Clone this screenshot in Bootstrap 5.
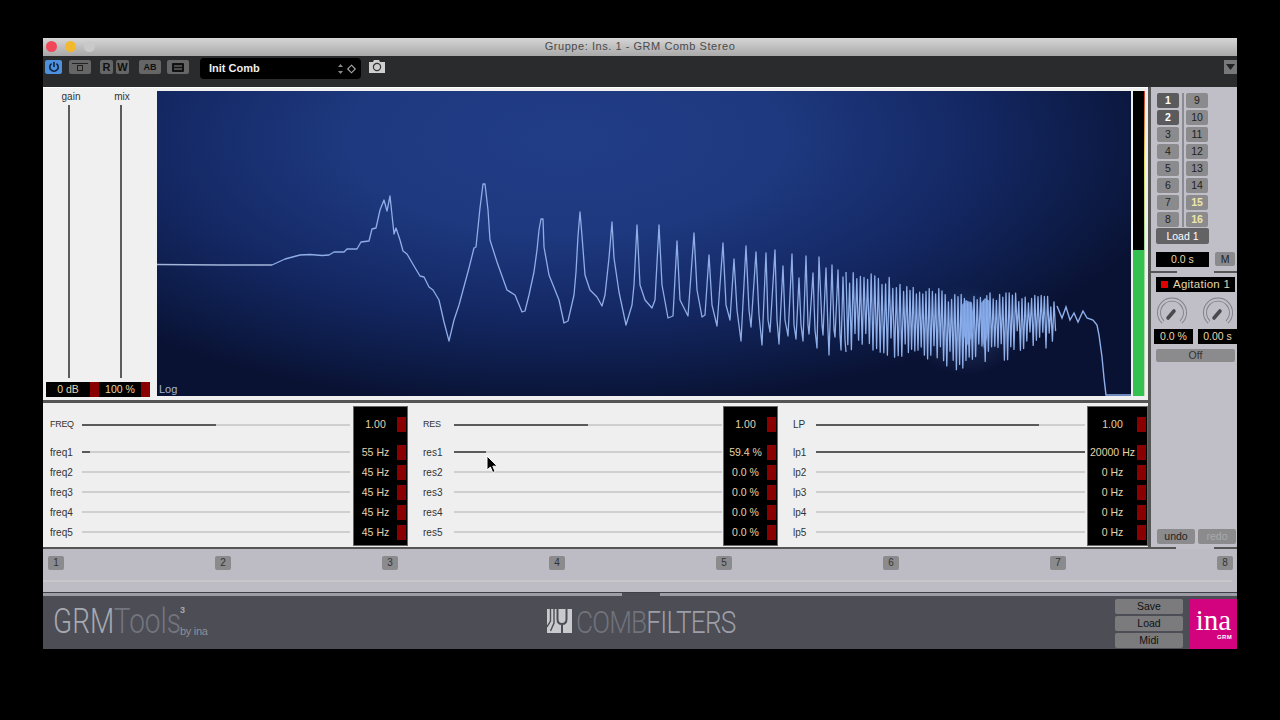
<!DOCTYPE html>
<html lang="en">
<head>
<meta charset="utf-8">
<title>GRM Comb Stereo</title>
<link href="https://cdn.jsdelivr.net/npm/bootstrap@5.3.0/dist/css/bootstrap.min.css" rel="stylesheet">
<style>
html,body{background:#000;height:720px;overflow:hidden}
body{font-family:"Liberation Sans",Arial,sans-serif;font-size:10.5px;color:#333;position:relative}
.pl-win{width:1194px;height:611px;margin:38px 0 0 43px}
.pl-title{height:18px;background:linear-gradient(#d6d6d6,#a9a9a9);color:#4a4a4a;font-size:11px;line-height:17px;position:relative;letter-spacing:.55px}
.pl-dot{width:11px;height:11px;border-radius:50%}
.pl-dots{position:absolute;left:3px;top:3px;gap:8px}
.pl-tool{height:31px;background:#2a2b2d;padding:0 0 0 2px}
.tb{height:14px;margin-top:4px;background:#666;border-radius:2px;color:#111;display:flex;align-items:center;justify-content:center;font-weight:700;font-size:11px;line-height:1}
.tb svg{display:block}
.tb-power{width:17px;background:#4c90de;margin-right:7px}
.tb-a{width:22px;margin-right:9px}
.tb-r{width:13px;margin-right:3px}
.tb-w{width:13px;margin-right:10px}
.tb-ab{width:22px;margin-right:6px;font-size:9px}
.tb-l{width:22px;margin-right:11px}
.pl-preset{width:161px;height:21px;margin-top:2px;background:#000;border-radius:4px;color:#eee;font-weight:700;font-size:11px;padding:0 2px 0 9px}
.pl-cam{margin:4px 0 0 7px}
.pl-menu{width:13px;height:14px;margin-top:4px;background:#77787c;margin-left:auto;display:flex;align-items:center;justify-content:center}
.pl-main{height:462px}
.pl-left{width:1108px;border-right:3px solid #555;border-bottom:2px solid #555;background:#efefef}
.pl-top{height:316px;flex:0 0 316px;border-bottom:3px solid #555;padding:3px 0 0 0;background:#f0f0f0;border-top:1px solid #fff}
.pl-io{width:114px;padding-left:3px}
.pl-iolabels{height:14px;font-size:10px;line-height:12px;color:#333}
.pl-iolabels span{width:52px;text-align:center;display:block}
.pl-iolabels span:first-child{width:50px}
.pl-vf{height:273px}
.pl-vline{width:2px;background:#5c5c5c}
.pl-vf .pl-vline:first-child{margin-left:22px}
.pl-vf .pl-vline:last-child{margin-left:50px}
.pl-ioval{width:104px;height:15px;margin-top:4px;background:#000;color:#e8d6ac;font-size:10.5px;line-height:15px}
.pl-ioval span{display:block;text-align:center}
.pl-ioval .v1{width:44px}
.pl-ioval .v2{width:42px}
.pl-red{background:#8a0000}
.pl-ioval .pl-red{width:9px}
.pl-disp{width:974px;height:305px;position:relative;background:radial-gradient(ellipse 64% 88% at 42% 16%,#213d86 0%,#1e397f 35%,#142864 65%,#0c1a44 88%,#0a1233 100%);overflow:hidden}
.pl-disp svg{display:block}
.pl-log{position:absolute;left:2px;bottom:0;color:#a6b6cf;font-size:11px;line-height:13px}
.pl-meter{width:12px;height:305px;margin-left:2px;background:linear-gradient(#d23a2a,#e2d860 22%,#9fd69a 52%,#c8d8c0) right/1px 100% no-repeat,linear-gradient(#000 52%,#35c14f 52%)}
.pl-rows{height:142px}
.pl-sec{height:142px;padding-top:4px}
.pl-sec1{width:364px;padding-left:7px}
.pl-sec2{width:370px;padding-left:16px}
.pl-sec3{width:370px;padding-left:16px}
.pl-fcol{flex:1 1 auto;min-width:0}
.pl-frow{height:20px;display:flex;align-items:center;font-size:10px;color:#333}
.pl-frow.big{height:35px}
.pl-frow.big .pl-lab{font-size:9px;letter-spacing:-.3px}
.pl-sec3 .pl-frow.big .pl-lab{font-size:10px;letter-spacing:0}
.pl-lab{flex:0 0 auto}
.pl-sec1 .pl-lab{width:32px}
.pl-sec2 .pl-lab{width:31px}
.pl-sec3 .pl-lab{width:23px}
.pl-track{flex:1 1 auto;height:2px;background:#cfcfcf;position:relative}
.pl-fill{display:block;height:2px;background:#5a5a5a}
.pl-sec1 .pl-fcol{padding-right:4px}
.pl-sec2 .pl-fcol{padding-right:2px}
.pl-sec3 .pl-fcol{padding-right:3px}
.pl-vcol{flex:0 0 53px;background:#000;height:138px;color:#e4d3ac;box-shadow:0 0 0 1px #666}
.pl-sec3 .pl-vcol{flex-basis:59px}
.pl-vrow{height:20px;display:flex;align-items:center;justify-content:space-between;font-size:10.5px}
.pl-vrow.big{height:35px}
.pl-vrow b{font-weight:400;flex:1 1 auto;text-align:center;white-space:nowrap;padding-top:1px}
.pl-vrow i{display:block;width:9px;height:15px;background:#8a0000;margin-right:1px}
.pl-strip{height:43px;background:#bdbcc4}
.pl-nums{padding:7px 4px 0 5px}
.pl-n{width:16px;height:14px;background:#8b8b8d;border-radius:2px;font-size:10px;line-height:14px;text-align:center;color:#333}
.pl-stripline{height:2px;background:#c8c8ca;margin:10px 5px 0 0}
.pl-right{width:86px;background:#c0bfc7;padding:6px 0 0 0}
.pl-grid{display:grid;grid-template-columns:22px 22px;column-gap:7px;row-gap:2px;width:51px;margin-left:6px;background:linear-gradient(#8a8a92,#8a8a92) center/2px 100% no-repeat}
.pl-ch{height:15px;background:#8b8b8d;border-radius:2px;text-align:center;font-size:10.5px;line-height:15px;color:#222}
.pl-ch.on{background:#5b5b5d;color:#fff;font-weight:700}
.pl-ch.hi{color:#efe7a6;font-weight:700}
.pl-load{width:53px;height:16px;background:#636365;color:#fff;text-align:center;line-height:16px;margin:1px 0 0 5px;border-radius:2px;font-size:10.5px}
.pl-time{margin:8px 0 0 5px}
.pl-tval{width:53px;height:15px;background:#000;color:#e8d6ac;text-align:center;line-height:15px}
.pl-m{width:20px;height:14px;background:#8b8b8d;border-radius:2px;text-align:center;line-height:14px;margin-left:6px;color:#222}
.pl-sep{height:2px;margin-top:4px}
.pl-sep span{display:block;height:2px;background:#555}
.pl-sep .s1{width:26px}
.pl-sep .s2{width:23px}
.pl-agit{height:15px;width:79px;margin:4px 0 0 5px;background:#000;color:#e8d6ac;font-size:11.5px;line-height:15px;padding-left:5px;letter-spacing:.25px;white-space:nowrap}
.pl-agit i{display:inline-block;width:7px;height:7px;background:#e00000;margin-right:5px}
.pl-knobs{margin:5px 0 0 6px;height:32px;gap:16px}
.pl-kv{margin:0 0 0 3px;gap:5px}
.pl-kv span{display:block;height:15px;background:#000;color:#e8d6ac;text-align:center;line-height:15px;white-space:nowrap}
.pl-kv .a{width:39px}
.pl-kv .b{width:39px}
.pl-off{width:79px;height:13px;margin:5px 0 0 5px;background:#8b8b8d;border-radius:2px;text-align:center;line-height:13px;color:#333}
.pl-undo{margin:167px 0 0 6px;gap:3px}
.pl-undo span{display:block;width:38px;height:15px;background:#8b8b8d;border-radius:2px;text-align:center;line-height:15px;color:#222}
.pl-undo span+span{color:#a9a9ab}
.pl-rsep{height:2px;margin-top:3px}
.pl-rsep .s1{display:block;width:25px;height:2px;background:#555}
.pl-rsep .s2{display:block;width:23px;height:2px;background:#555}
.pl-foot{height:57px;background:#4c4d55;border-top:1px solid #3f4047;position:relative}
.pl-footline{height:3px}
.pl-footline span{display:block;height:3px;background:#9c9da6}
.pl-footline .a{width:579px}
.pl-footline .b{width:577px}
.pl-fbody{height:53px;padding:3px 0 0 0}
.pl-grm{width:504px;padding:4px 0 0 10px;white-space:nowrap}
.pl-grmtxt{display:block;width:127px;font-family:Roboto,"Liberation Sans",sans-serif;font-weight:300;line-height:38px;font-size:35px;transform:scaleX(.8);transform-origin:0 50%}
.pl-grmtxt .g1{color:#a7a9b1}
.pl-grmtxt .g2{color:#74757d}
.pl-grmside{width:30px;line-height:1;color:#8f9098}
.pl-grmside b{display:block;font-size:9px;color:#a7a9b1;margin-top:3px}
.pl-grmside span{display:block;font-size:11px;letter-spacing:-.3px;margin-top:11px}
.pl-comb{width:568px;padding-top:4px;font-family:Roboto,"Liberation Sans",sans-serif;font-weight:300;white-space:nowrap}
.pl-comb svg{margin:2px 3px 0 0;flex:0 0 auto}
.pl-combtxt{display:block;font-size:32px;line-height:38px;letter-spacing:-1px;transform:scaleX(.82);transform-origin:0 50%}
.pl-comb .c1{color:#72737b}
.pl-comb .c2{color:#9d9ea7}
.pl-fbtns{width:68px;gap:2px}
.pl-fbtns span{display:block;height:15px;background:#7b7b7d;border-radius:2px;text-align:center;line-height:15px;color:#111;font-size:10.5px}
.pl-ina{width:47px;height:50px;margin-left:7px;background:#d3037f;color:#fff;text-align:center;font-family:"Liberation Serif",serif;font-size:29px;line-height:27px;padding-top:8px}
.pl-ina em{display:block;font-family:"Liberation Sans",sans-serif;font-style:normal;font-weight:700;font-size:6px;line-height:7px;text-align:right;padding-right:5px;letter-spacing:.3px}
.pl-cursor{position:absolute;left:486px;top:455px}
</style>
</head>
<body>
<div class="pl-win d-flex flex-column">
  <div class="pl-title text-center">
    <div class="pl-dots d-flex"><div class="pl-dot" style="background:#f0485a"></div><div class="pl-dot" style="background:#f2b92f"></div><div class="pl-dot" style="background:#c9c9c9"></div></div>
    Gruppe: Ins. 1 - GRM Comb Stereo
  </div>
  <div class="pl-tool d-flex align-items-start">
    <div class="tb tb-power"><svg width="12" height="12" viewBox="0 0 12 12" fill="none" stroke="#10233f" stroke-width="1.6"><path d="M3.6 2.6a4.2 4.2 0 1 0 4.8 0"/><path d="M6 1v5"/></svg></div>
    <div class="tb tb-a"><svg width="16" height="10" viewBox="0 0 16 10" fill="none" stroke="#222" stroke-width="1"><path d="M0 1.5h16"/><rect x="5.500" y="3.500" width="5" height="5"/></svg></div>
    <div class="tb tb-r">R</div><div class="tb tb-w">W</div>
    <div class="tb tb-ab">AB</div>
    <div class="tb tb-l"><svg width="12" height="9" viewBox="0 0 12 9" fill="#111"><rect width="12" height="9" rx="1"/><path d="M2 2.500h8v1H2zM2 5.500h8v1H2z" fill="#888"/></svg></div>
    <div class="pl-preset d-flex align-items-center justify-content-between"><span>Init Comb</span>
      <svg width="22" height="14" viewBox="0 0 22 14" fill="none"><path d="M1 5l2.500-3L6 5z" fill="#888"/><path d="M1 9l2.500 3L6 9z" fill="#888"/><path d="M14.500 3.200l3.800 3.800-3.800 3.800L10.700 7z" stroke="#aaa" stroke-width="1.100"/></svg></div>
    <div class="pl-cam"><svg width="18" height="13" viewBox="0 0 18 13" style="display:block"><path d="M1 2h4l1-2h5l1 2h5v11H1z" fill="#cfcfcf"/><circle cx="9" cy="7" r="3.600" fill="#cfcfcf" stroke="#333" stroke-width="1.200"/></svg></div>
    <div class="pl-menu"><svg width="9" height="6" viewBox="0 0 9 6"><path d="M0 0h9L4.500 6z" fill="#222"/></svg></div>
  </div>
  <div class="pl-main d-flex">
    <div class="pl-left d-flex flex-column">
      <div class="pl-top d-flex">
        <div class="pl-io">
          <div class="pl-iolabels d-flex"><span>gain</span><span>mix</span></div>
          <div class="pl-vf d-flex"><div class="pl-vline"></div><div class="pl-vline"></div></div>
          <div class="pl-ioval d-flex"><span class="v1">0 dB</span><span class="pl-red"></span><span class="v2">100 %</span><span class="pl-red"></span></div>
        </div>
        <div class="pl-disp">
          <svg id="wave" width="974" height="305" viewBox="157 91 974 305" fill="none">
            <defs><radialGradient id="glow"><stop offset="0" stop-color="#5d8fe0" stop-opacity=".28"/><stop offset="1" stop-color="#5d8fe0" stop-opacity="0"/></radialGradient></defs>
            <ellipse cx="965" cy="330" rx="55" ry="45" fill="url(#glow)"/>
            <polyline stroke="#a3b6da" stroke-width="1.4" points="157,264.5 220,265 272,265"/>
            <polyline stroke="#8fade6" stroke-width="1.3" stroke-linejoin="round" points="272,265 285,259 300,255 310,254.5 322,255.5 329,255 334,252 344,252 347,249 357,249 361,242 369,241 372,229 376,228 380,210 384,200 387,211 390,196 394,234 396,228 400,240 403,251 407,254 414,266 420,276 424,277 429,287 433,290 439,300 444,322 449,341 454,320 459,305 469,268 474,248 476,247 480,208 483,184 485,184 488,210 490,240 497,262 507,290 515,295 522,312 525,311 529,295 534,272 537,250 539,230 541,219 543,219 544,247 549,275 559,300 564,323 568,321 574,295 576,272 578,236 580,212 582,236 585,275 590,290 597,297 602,306 605,295 609,258 612,222 614,258 619,292 626,325 632,305 634,285 637,225 640,285 645,300 652,308 655,300 659,225 662,285 668,318 673,316 677,241 680,300 688,316 694,233 697,290 702,317 705,315 709,255 712,305 717,326 723,243 726,305 730,320 734,259 737,310 741,341 746,246 749,310 751,327 756,252 759,315 762,345 766,253 768,320 770,332 775,250 777,320 779,344 783,266 785,320 788,336 792,254 794,325 796,339 799,278 801,325 803,341 806,256 808,325 809,334 813,273 815,330 817,348 819,257 822,325 823,335 826,268 828,330 829,355 832,265 834,330 835,337 838,270 840,335 841,350 843,277 845,340 846,352"/>
            <polyline id="dense" stroke="#8fb0ea" stroke-width="1.3" stroke-linejoin="round"/>
            <polygon fill="#86aaea" fill-opacity=".85" points="961,306 966,300 972,303 974,322 971,338 968,346 964,336 962,342"/>
            <polygon fill="#86aaea" fill-opacity=".85" points="980,304 985,298 990,301 989,326 987,338 984,350 982,336"/>
            <polyline stroke="#8fb0ea" stroke-width="1.4" points="1057,306 1062,318 1066,307 1070,320 1074,313 1078,322 1083,311 1087,318 1093,320 1097,325 1099,335 1102,357 1104,378 1106,395 1131,395"/>
          </svg>
          <div class="pl-log">Log</div>
        </div>
        <div class="pl-meter"></div>
      </div>
      <div class="pl-rows d-flex">
        <div class="pl-sec pl-sec1 d-flex">
          <div class="pl-fcol">
            <div class="pl-frow big"><span class="pl-lab">FREQ</span><div class="pl-track"><span class="pl-fill" style="width:50%"></span></div></div>
            <div class="pl-frow"><span class="pl-lab">freq1</span><div class="pl-track"><span class="pl-fill" style="width:3%"></span></div></div>
            <div class="pl-frow"><span class="pl-lab">freq2</span><div class="pl-track"></div></div>
            <div class="pl-frow"><span class="pl-lab">freq3</span><div class="pl-track"></div></div>
            <div class="pl-frow"><span class="pl-lab">freq4</span><div class="pl-track"></div></div>
            <div class="pl-frow"><span class="pl-lab">freq5</span><div class="pl-track"></div></div>
          </div>
          <div class="pl-vcol">
            <div class="pl-vrow big"><b>1.00</b><i></i></div>
            <div class="pl-vrow"><b>55 Hz</b><i></i></div>
            <div class="pl-vrow"><b>45 Hz</b><i></i></div>
            <div class="pl-vrow"><b>45 Hz</b><i></i></div>
            <div class="pl-vrow"><b>45 Hz</b><i></i></div>
            <div class="pl-vrow"><b>45 Hz</b><i></i></div>
          </div>
        </div>
        <div class="pl-sec pl-sec2 d-flex">
          <div class="pl-fcol">
            <div class="pl-frow big"><span class="pl-lab">RES</span><div class="pl-track"><span class="pl-fill" style="width:50%"></span></div></div>
            <div class="pl-frow"><span class="pl-lab">res1</span><div class="pl-track"><span class="pl-fill" style="width:12%"></span></div></div>
            <div class="pl-frow"><span class="pl-lab">res2</span><div class="pl-track"></div></div>
            <div class="pl-frow"><span class="pl-lab">res3</span><div class="pl-track"></div></div>
            <div class="pl-frow"><span class="pl-lab">res4</span><div class="pl-track"></div></div>
            <div class="pl-frow"><span class="pl-lab">res5</span><div class="pl-track"></div></div>
          </div>
          <div class="pl-vcol">
            <div class="pl-vrow big"><b>1.00</b><i></i></div>
            <div class="pl-vrow"><b>59.4 %</b><i></i></div>
            <div class="pl-vrow"><b>0.0 %</b><i></i></div>
            <div class="pl-vrow"><b>0.0 %</b><i></i></div>
            <div class="pl-vrow"><b>0.0 %</b><i></i></div>
            <div class="pl-vrow"><b>0.0 %</b><i></i></div>
          </div>
        </div>
        <div class="pl-sec pl-sec3 d-flex">
          <div class="pl-fcol">
            <div class="pl-frow big"><span class="pl-lab">LP</span><div class="pl-track"><span class="pl-fill" style="width:83%"></span></div></div>
            <div class="pl-frow"><span class="pl-lab">lp1</span><div class="pl-track"><span class="pl-fill" style="width:100%"></span></div></div>
            <div class="pl-frow"><span class="pl-lab">lp2</span><div class="pl-track"></div></div>
            <div class="pl-frow"><span class="pl-lab">lp3</span><div class="pl-track"></div></div>
            <div class="pl-frow"><span class="pl-lab">lp4</span><div class="pl-track"></div></div>
            <div class="pl-frow"><span class="pl-lab">lp5</span><div class="pl-track"></div></div>
          </div>
          <div class="pl-vcol">
            <div class="pl-vrow big"><b>1.00</b><i></i></div>
            <div class="pl-vrow"><b>20000 Hz</b><i></i></div>
            <div class="pl-vrow"><b>0 Hz</b><i></i></div>
            <div class="pl-vrow"><b>0 Hz</b><i></i></div>
            <div class="pl-vrow"><b>0 Hz</b><i></i></div>
            <div class="pl-vrow"><b>0 Hz</b><i></i></div>
          </div>
        </div>
      </div>
    </div>
    <div class="pl-right">
      <div class="pl-grid">
        <div class="pl-ch on">1</div><div class="pl-ch">9</div>
        <div class="pl-ch on">2</div><div class="pl-ch">10</div>
        <div class="pl-ch">3</div><div class="pl-ch">11</div>
        <div class="pl-ch">4</div><div class="pl-ch">12</div>
        <div class="pl-ch">5</div><div class="pl-ch">13</div>
        <div class="pl-ch">6</div><div class="pl-ch">14</div>
        <div class="pl-ch">7</div><div class="pl-ch hi">15</div>
        <div class="pl-ch">8</div><div class="pl-ch hi">16</div>
      </div>
      <div class="pl-load">Load 1</div>
      <div class="pl-time d-flex"><div class="pl-tval">0.0 s</div><div class="pl-m">M</div></div>
      <div class="pl-sep d-flex justify-content-between"><span class="s1"></span><span class="s2"></span></div>
      <div class="pl-agit"><i></i>Agitation 1</div>
      <div class="pl-knobs d-flex">
        <svg width="30" height="30" viewBox="0 0 30 30" fill="none"><path d="M6 25A13 13 0 1 1 24 25" stroke="#7e7e84" stroke-width="4"/><path d="M6 25A13 13 0 1 1 24 25" stroke="#c0bfc7" stroke-width="2.2"/><path d="M17 14L11 21" stroke="#4a4a4e" stroke-width="3.6" stroke-linecap="round"/></svg>
        <svg width="30" height="30" viewBox="0 0 30 30" fill="none"><path d="M6 25A13 13 0 1 1 24 25" stroke="#7e7e84" stroke-width="4"/><path d="M6 25A13 13 0 1 1 24 25" stroke="#c0bfc7" stroke-width="2.2"/><path d="M17 14L11 21" stroke="#4a4a4e" stroke-width="3.6" stroke-linecap="round"/></svg>
      </div>
      <div class="pl-kv d-flex"><span class="a">0.0 %</span><span class="b">0.00 s</span></div>
      <div class="pl-off">Off</div>
      <div class="pl-undo d-flex"><span>undo</span><span>redo</span></div>
      <div class="pl-rsep d-flex justify-content-between"><span class="s1"></span><span class="s2"></span></div>
    </div>
  </div>
  <div class="pl-strip">
    <div class="pl-nums d-flex justify-content-between">
      <div class="pl-n">1</div><div class="pl-n">2</div><div class="pl-n">3</div><div class="pl-n">4</div><div class="pl-n">5</div><div class="pl-n">6</div><div class="pl-n">7</div><div class="pl-n">8</div>
    </div>
    <div class="pl-stripline"></div>
  </div>
  <div class="pl-foot">
    <div class="pl-footline d-flex justify-content-between"><span class="a"></span><span class="b"></span></div>
    <div class="pl-fbody d-flex">
      <div class="pl-grm d-flex"><span class="pl-grmtxt"><span class="g1">GRM</span><span class="g2">Tools</span></span><div class="pl-grmside"><b>3</b><span>by ina</span></div></div>
      <div class="pl-comb d-flex align-items-start">
        <svg width="26" height="25" viewBox="0 0 26 25" style="margin-top:6px"><rect width="25" height="24" fill="#c9cacd"/><path d="M3.500 0v12l-3.500 6M7 0v14l-3.500 8" fill="none" stroke="#4c4d55" stroke-width="1.4"/><path d="M10.500 0v10q0 5 4.500 5t4.500-5V0M15 15v9" fill="none" stroke="#4c4d55" stroke-width="2"/></svg>
        <span class="pl-combtxt"><span class="c1">COMB</span><span class="c2">FILTERS</span></span>
      </div>
      <div class="pl-fbtns d-flex flex-column"><span>Save</span><span>Load</span><span>Midi</span></div>
      <div class="pl-ina">ina<em>GRM</em></div>
    </div>
  </div>
</div>
<svg class="pl-cursor" width="12" height="19" viewBox="0 0 12 19"><path d="M1 1v14l3.400-3 2.300 5.500 2.400-1-2.300-5.300h4.500z" fill="#000" stroke="#fff" stroke-width="1"/></svg>
<script>
(function(){
  var T=[[846,272],[880,272],[917,285],[960,292],[983,290],[1040,293],[1050,296],[1057,306]];
  var B=[[846,352],[883,357],[933,360],[954,372],[987,364],[1000,366],[1017,352],[1043,355],[1050,345],[1057,322]];
  function at(a,x){for(var i=1;i<a.length;i++){if(x<=a[i][0]){var t=(x-a[i-1][0])/(a[i][0]-a[i-1][0]);return a[i-1][1]+t*(a[i][1]-a[i-1][1]);}}return a[a.length-1][1];}
  function r(i){var s=Math.sin(i*12.9898)*43758.5453;return s-Math.floor(s);}
  var p=[],x=846,i=0;
  while(x<1057){
    var top=at(T,x)+r(i)*12, bot=at(B,x)-r(i+50)*24;
    p.push(x.toFixed(1)+","+top.toFixed(1));
    var h=x<900?1.8:1.6;
    x+=h;
    p.push(x.toFixed(1)+","+bot.toFixed(1));
    x+=h;i++;
  }
  document.getElementById("dense").setAttribute("points",p.join(" "));
})();
</script>
<script src="https://cdn.jsdelivr.net/npm/bootstrap@5.3.0/dist/js/bootstrap.bundle.min.js"></script>
</body>
</html>
